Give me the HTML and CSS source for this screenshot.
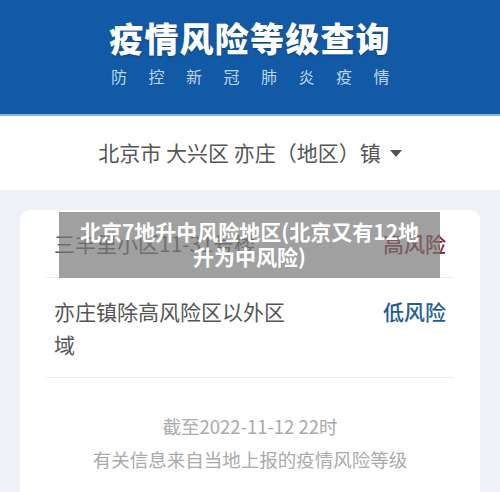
FILE: index.html
```html
<!DOCTYPE html>
<html lang="zh-CN">
<head>
    <meta charset="UTF-8">
    <meta name="viewport" content="width=device-width, initial-scale=1.0">
    <title>疫情风险等级查询</title>
    <link rel="stylesheet" href="styles.css">
</head>
<body>
    <!-- Header -->
    <div class="header">
        <h1>疫情风险等级查询</h1>
        <p class="subtitle">防控新冠肺炎疫情</p>
    </div>

    <!-- Area picker -->
    <div class="picker">
        <span>北京市 大兴区 亦庄（地区）镇</span>
        <span class="caret"></span>
    </div>

    <div class="main">
        <div class="card">
            <div class="row first">
                <span class="place">三丰里小区11-31号楼</span>
                <span class="level high">高风险</span>
            </div>
            <div class="row">
                <span class="place">亦庄镇除高风险区以外区域</span>
                <span class="level low">低风险</span>
            </div>
            <div class="note">
                <p>截至2022-11-12 22时</p>
                <p>有关信息来自当地上报的疫情风险等级</p>
            </div>
        </div>
        <div class="caption">北京7地升中风险地区(北京又有12地升为中风险)</div>
    </div>
</body>
</html>
```

FILE: styles.css
```css
/* Global Styles */
body {
    margin: 0;
    font-family: "Noto Sans CJK SC", "Noto Sans", sans-serif;
    background: #eef2f6;
    color: #555;
    overflow: hidden;
}

/* Header */
.header {
    height: 114px;
    background: #1259a6;
    border-bottom: 2px solid #8fb6df;
    text-align: center;
    overflow: hidden;
}

.header h1 {
    margin: 16px 0 0;
    font-size: 34px;
    line-height: 44px;
    font-weight: 900;
    color: #fff;
    letter-spacing: 1.2px;
    text-shadow: 0 1px 2px rgba(0, 0, 0, 0.25);
}

.subtitle {
    margin: 4px 0 0 22px;
    font-size: 16px;
    line-height: 24px;
    color: #bcd6f2;
    letter-spacing: 21.5px;
}

/* Area picker */
.picker {
    height: 74px;
    background: #fff;
    display: flex;
    align-items: center;
    justify-content: center;
    gap: 9px;
    font-size: 21px;
    color: #555;
    padding-bottom: 2px;
    box-sizing: border-box;
}

.caret {
    width: 0;
    height: 0;
    border-left: 6px solid transparent;
    border-right: 6px solid transparent;
    border-top: 7px solid #555;
    margin-top: 2px;
}

/* Card */
.main {
    position: relative;
    padding: 20px 20px 0;
}

.card {
    background: #fff;
    border-radius: 10px;
    padding: 0 26px;
    height: 320px;
}

.row {
    display: flex;
    justify-content: space-between;
    align-items: flex-start;
    padding: 17px 8px 16px;
    border-bottom: 1px solid #eceef1;
    font-size: 21px;
    line-height: 33px;
}

.row.first {
    padding: 17px 8px 17px;
}

.place {
    width: 236px;
    color: #555;
}

.level {
    font-weight: 500;
}

.high {
    color: #8b1a2b;
}

.low {
    color: #235d96;
}

.note {
    padding-top: 32px;
    text-align: center;
    color: #aaa;
    font-size: 18.5px;
    line-height: 33px;
}

.note p {
    margin: 0;
}

/* Overlay caption */
.caption {
    position: absolute;
    left: 59px;
    top: 22px;
    width: 381px;
    height: 66px;
    box-sizing: border-box;
    padding: 7px 16px 0;
    background: rgba(120, 120, 120, 0.7);
    color: #fff;
    font-size: 21px;
    font-weight: 700;
    line-height: 25px;
    text-align: center;
}
```
